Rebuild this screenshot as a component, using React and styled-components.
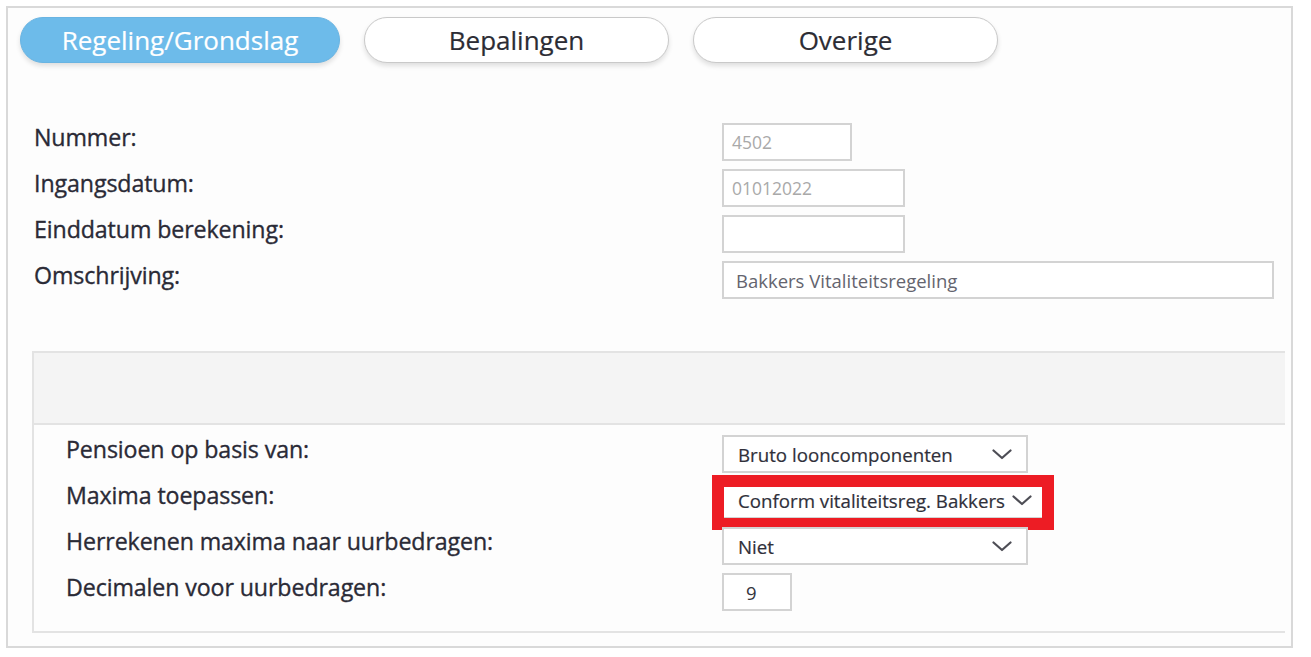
import React from "react";
import styled, { createGlobalStyle } from "styled-components";

const Global = createGlobalStyle`
  html, body { margin: 0; padding: 0; background: #ffffff; }
  body { font-family: "Open Sans", "Noto Sans", sans-serif; color: #2f2f38; }
  * { box-sizing: border-box; }
`;

const Frame = styled.div`
  margin: 6px 0 0 6px;
  width: 1287px;
  height: 642px;
  border: 2px solid #d9d9d9;
  background: #fdfdfd;
  overflow: hidden;
`;

const TabBar = styled.div`
  display: flex;
  gap: 24px;
  padding: 9px 0 0 12px;
`;

const Tab = styled.div`
  width: ${(p) => p.$w}px;
  height: 46px;
  border-radius: 23px;
  display: flex;
  align-items: center;
  justify-content: center;
  font-size: 26px;
  -webkit-text-stroke: 0.2px ${(p) => (p.$active ? "#ffffff" : "#2c2c34")};
  background: ${(p) => (p.$active ? "#6dbbea" : "#ffffff")};
  color: ${(p) => (p.$active ? "#ffffff" : "#2c2c34")};
  border: 1.5px solid ${(p) => (p.$active ? "#69b4e2" : "#c9c9c9")};
  box-shadow: 0 3px 5px rgba(0, 0, 0, 0.12);
`;

const Form = styled.div`
  display: grid;
  grid-template-columns: ${(p) => p.$label}px 1fr;
  row-gap: 8px;
  grid-auto-rows: 38px;
`;

const TopForm = styled(Form)`
  margin: 60px 0 0 26px;
`;

const Label = styled.div`
  font-size: 23.2px;
  line-height: 28px;
  letter-spacing: -0.1px;
  color: #2a2a36;
  -webkit-text-stroke: 0.35px #2a2a36;
  white-space: nowrap;
`;

const TextBox = styled.div`
  width: ${(p) => p.$w}px;
  height: 38px;
  border: 2px solid #d3d3d3;
  background: #fff;
  padding-left: ${(p) => p.$pad || 8}px;
  display: flex;
  align-items: center;
  font-size: ${(p) => (p.$muted ? 17.5 : 18.5)}px;
  color: ${(p) => (p.$muted ? "#a9a9a9" : "#64646e")};
`;

const Section = styled.div`
  margin: 52px 0 0 24px;
  width: 1253px;
  border-top: 2px solid #e3e3e3;
  border-left: 2px solid #e3e3e3;
  border-bottom: 2px solid #e3e3e3;
`;

const SectionHeader = styled.div`
  height: 72px;
  background: #f4f4f4;
  border-bottom: 2px solid #e3e3e3;
`;

const SectionBody = styled.div`
  padding: 10px 0 20px 32px;
`;

const SelectWrap = styled.div`
  position: relative;
  width: ${(p) => p.$w}px;
  height: 38px;
`;

const SelectBox = styled.div`
  width: 100%;
  height: 38px;
  border: 2px solid #d3d3d3;
  background: #fff;
  display: flex;
  align-items: center;
  justify-content: space-between;
  padding: 0 ${(p) => p.$right || 14}px 0 14px;
  font-size: 18.7px;
  color: #30303a;
  -webkit-text-stroke: 0.2px #30303a;
  white-space: nowrap;
`;

const Highlight = styled.div`
  position: absolute;
  left: -10px;
  right: -10px;
  top: -6px;
  bottom: -11px;
  border: 12px solid #ed1c24;
  pointer-events: none;
`;

const Chevron = () => (
  <svg width="20" height="11" viewBox="0 0 20 11">
    <polyline
      points="1.5,1.5 10,9 18.5,1.5"
      fill="none"
      stroke="#4d4d55"
      strokeWidth="2.2"
      strokeLinecap="round"
      strokeLinejoin="round"
    />
  </svg>
);

const Select = ({ value, w, right, highlight }) => (
  <SelectWrap $w={w}>
    <SelectBox $right={right}>
      <span>{value}</span>
      <Chevron />
    </SelectBox>
    {highlight && <Highlight />}
  </SelectWrap>
);

export default function App() {
  return (
    <>
      <Global />
      <Frame>
        <TabBar>
          <Tab $active $w={320}>Regeling/Grondslag</Tab>
          <Tab $w={305}>Bepalingen</Tab>
          <Tab $w={305}>Overige</Tab>
        </TabBar>

        <TopForm $label={688}>
          <Label>Nummer:</Label>
          <TextBox $w={130} $muted>4502</TextBox>
          <Label>Ingangsdatum:</Label>
          <TextBox $w={183} $muted>01012022</TextBox>
          <Label>Einddatum berekening:</Label>
          <TextBox $w={183} />
          <Label>Omschrijving:</Label>
          <TextBox $w={552} $pad={12}>Bakkers Vitaliteitsregeling</TextBox>
        </TopForm>

        <Section>
          <SectionHeader />
          <SectionBody>
            <Form $label={656}>
              <Label>Pensioen op basis van:</Label>
              <Select w={306} value="Bruto looncomponenten" />
              <Label>Maxima toepassen:</Label>
              <Select w={322} right={10} value="Conform vitaliteitsreg. Bakkers" highlight />
              <Label>Herrekenen maxima naar uurbedragen:</Label>
              <Select w={306} value="Niet" />
              <Label>Decimalen voor uurbedragen:</Label>
              <TextBox $w={70} $pad={22}>
                <span style={{ color: "#34343c" }}>9</span>
              </TextBox>
            </Form>
          </SectionBody>
        </Section>
      </Frame>
    </>
  );
}
